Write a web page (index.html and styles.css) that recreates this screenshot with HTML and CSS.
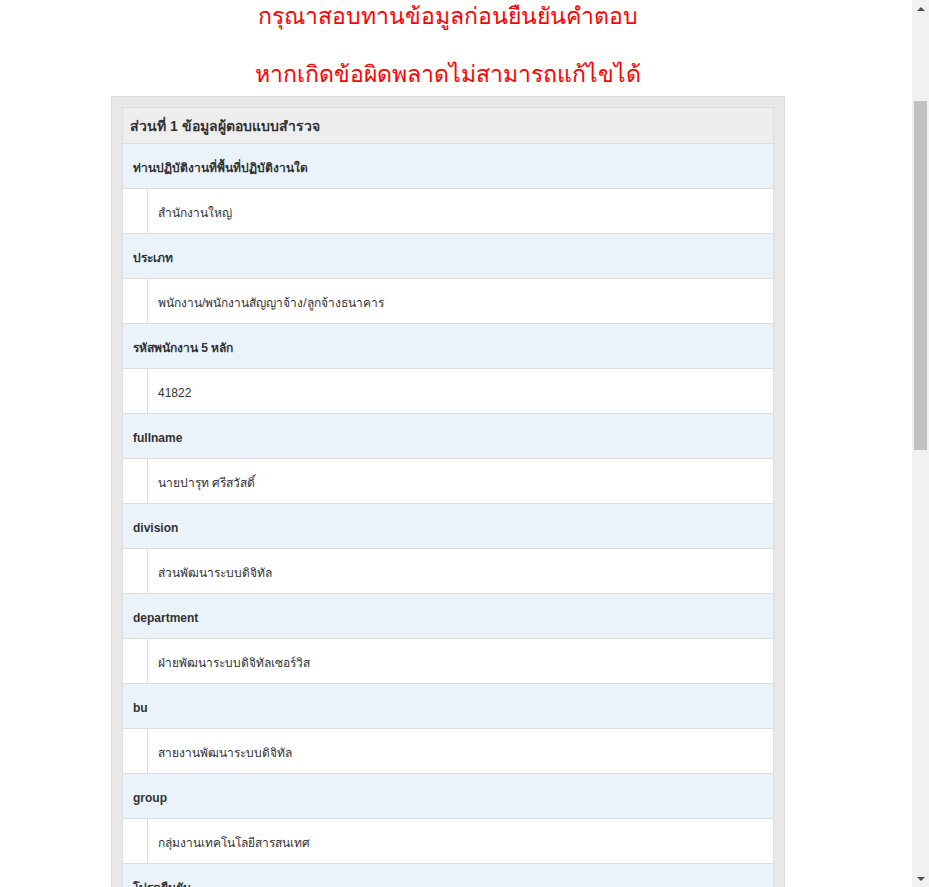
FILE: index.html
```html
<!DOCTYPE html>
<html lang="th">
<head>
<meta charset="utf-8">
<title>ตรวจสอบข้อมูล</title>
<link rel="stylesheet" href="styles.css">
</head>
<body>
<div class="wrap">
  <h3 class="notice">กรุณาสอบทานข้อมูลก่อนยืนยันคำตอบ<br><br>หากเกิดข้อผิดพลาดไม่สามารถแก้ไขได้</h3>
  <div class="outer">
    <div class="panel">
      <div class="panel-head">ส่วนที่ 1 ข้อมูลผู้ตอบแบบสำรวจ</div>

      <div class="q">ท่านปฏิบัติงานที่พื้นที่ปฏิบัติงานใด</div>
      <div class="a"><div class="a-gap"></div><div class="a-text">สำนักงานใหญ่</div></div>

      <div class="q">ประเภท</div>
      <div class="a"><div class="a-gap"></div><div class="a-text">พนักงาน/พนักงานสัญญาจ้าง/ลูกจ้างธนาคาร</div></div>

      <div class="q">รหัสพนักงาน 5 หลัก</div>
      <div class="a"><div class="a-gap"></div><div class="a-text">41822</div></div>

      <div class="q">fullname</div>
      <div class="a"><div class="a-gap"></div><div class="a-text">นายปารุท ศรีสวัสดิ์</div></div>

      <div class="q">division</div>
      <div class="a"><div class="a-gap"></div><div class="a-text">ส่วนพัฒนาระบบดิจิทัล</div></div>

      <div class="q">department</div>
      <div class="a"><div class="a-gap"></div><div class="a-text">ฝ่ายพัฒนาระบบดิจิทัลเซอร์วิส</div></div>

      <div class="q">bu</div>
      <div class="a"><div class="a-gap"></div><div class="a-text">สายงานพัฒนาระบบดิจิทัล</div></div>

      <div class="q">group</div>
      <div class="a"><div class="a-gap"></div><div class="a-text">กลุ่มงานเทคโนโลยีสารสนเทศ</div></div>

      <div class="q">โปรดยืนยัน</div>
      <div class="a"><div class="a-gap"></div><div class="a-text">ยืนยันข้อมูลถูกต้อง</div></div>
    </div>
  </div>
</div>

<div class="scrollbar" aria-hidden="true">
  <div class="sb-btn"><span class="arrow-up"></span></div>
  <div class="sb-track"><div class="sb-thumb"></div></div>
  <div class="sb-btn"><span class="arrow-down"></span></div>
</div>
</body>
</html>
```

FILE: styles.css
```css
html, body {
  margin: 0;
  padding: 0;
  background: #ffffff;
}

body {
  font-family: "Liberation Sans", Arial, "Noto Sans", sans-serif;
  font-size: 12px;
  color: #333333;
}

.wrap {
  width: 674px;
  margin-left: 111px;
}

.notice {
  margin: 0;
  padding-top: 2px;
  font-size: 23px;
  line-height: 29px;
  height: 85px;
  font-weight: normal;
  color: #ff0000;
  text-align: center;
}

.outer {
  margin-top: 9px;
  border: 1px solid #dcdcdc;
  background: #e8e8e8;
  padding: 10px;
}

.panel {
  border: 1px solid #dddddd;
  background: #ffffff;
}

.panel-head {
  height: 34px;
  line-height: 34px;
  padding: 1px 7px 0;
  background: #eeeeee;
  border-bottom: 1px solid #dddddd;
  font-size: 14px;
  font-weight: bold;
}

.q {
  line-height: 40px;
  padding: 4px 10px 0;
  background: #eaf2fa;
  border-bottom: 1px solid #dddddd;
  font-weight: bold;
}

.a {
  display: flex;
  border-bottom: 1px solid #dddddd;
}

.a-gap {
  width: 24px;
  border-right: 1px solid #dddddd;
}

.a-text {
  line-height: 40px;
  padding: 4px 10px 0;
}

/* window scrollbar (browser chrome overlay) */
.scrollbar {
  position: fixed;
  top: 0;
  right: 0;
  width: 17px;
  height: 100vh;
  background: #f1f1f1;
  display: flex;
  flex-direction: column;
}

.sb-btn {
  height: 17px;
  flex: none;
  display: flex;
  align-items: center;
  justify-content: center;
}

.arrow-up {
  width: 0;
  height: 0;
  border-left: 4px solid transparent;
  border-right: 4px solid transparent;
  border-bottom: 4px solid #505050;
  margin-top: 1px;
}

.arrow-down {
  width: 0;
  height: 0;
  border-left: 4px solid transparent;
  border-right: 4px solid transparent;
  border-top: 4px solid #505050;
  margin-top: 1px;
}

.sb-track {
  flex: 1;
  padding: 84px 2px 0;
}

.sb-thumb {
  height: 349px;
  background: #c1c1c1;
}
```
